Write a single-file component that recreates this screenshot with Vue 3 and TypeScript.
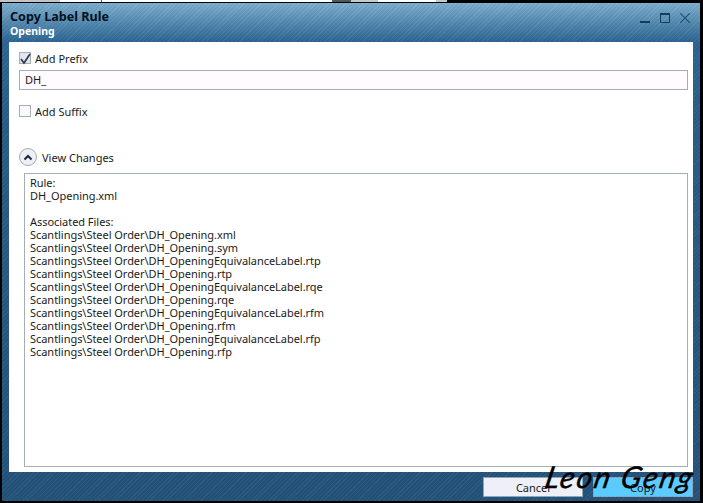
<script setup lang="ts">
const files: string[] = [
  'Scantlings\\Steel Order\\DH_Opening.xml',
  'Scantlings\\Steel Order\\DH_Opening.sym',
  'Scantlings\\Steel Order\\DH_OpeningEquivalanceLabel.rtp',
  'Scantlings\\Steel Order\\DH_Opening.rtp',
  'Scantlings\\Steel Order\\DH_OpeningEquivalanceLabel.rqe',
  'Scantlings\\Steel Order\\DH_Opening.rqe',
  'Scantlings\\Steel Order\\DH_OpeningEquivalanceLabel.rfm',
  'Scantlings\\Steel Order\\DH_Opening.rfm',
  'Scantlings\\Steel Order\\DH_OpeningEquivalanceLabel.rfp',
  'Scantlings\\Steel Order\\DH_Opening.rfp',
]
</script>

<template>
  <div class="screen">
    <div class="desk"></div>
    <div class="window">
      <header class="titlebar">
        <div class="titles">
          <div class="title">Copy Label Rule</div>
          <div class="subtitle">Opening</div>
        </div>
        <div class="controls">
          <svg width="10" height="10" viewBox="0 0 10 10"><path d="M0 9H10" stroke="#123f5f" stroke-width="2" /></svg>
          <svg width="10" height="10" viewBox="0 0 10 10"><path d="M.5 2V9.5H9.5V2" fill="none" stroke="#123f5f" stroke-width="1" /><path d="M0 1H10" stroke="#123f5f" stroke-width="2" /></svg>
          <svg width="10" height="10" viewBox="0 0 10 10"><path d="M0 0 10 10M10 0 0 10" stroke="#1f5273" stroke-width="1.1" /></svg>
        </div>
      </header>
      <main class="panel">
        <div class="check-row">
          <span class="box checked">
            <svg width="12" height="12" viewBox="0 0 12 12"><path d="M2 6 5 10 11 1" fill="none" stroke="#2c3d4c" stroke-width="1.7" /></svg>
          </span>
          <span>Add Prefix</span>
        </div>
        <div class="field">DH_</div>
        <div class="check-row suffix">
          <span class="box"></span>
          <span>Add Suffix</span>
        </div>
        <div class="expander">
          <span class="circle">
            <svg width="10" height="7" viewBox="0 0 10 7"><path d="M1.5 5.5 5 2 8.5 5.5" fill="none" stroke="#1c2a38" stroke-width="2" /></svg>
          </span>
          <span>View Changes</span>
        </div>
        <div class="changes">
          <div>Rule:</div>
          <div>DH_Opening.xml</div>
          <div class="gap">Associated Files:</div>
          <div v-for="file in files" :key="file">{{ file }}</div>
        </div>
      </main>
      <footer class="footer">
        <button class="btn cancel">Cancel</button>
        <button class="btn copy">Copy</button>
        <span class="mark">Leon Geng</span>
      </footer>
    </div>
  </div>
</template>

<style>
html, body { margin: 0; background: #000; }
</style>

<style scoped>
.screen {
  width: 703px;
  height: 503px;
  background: #000;
  overflow: hidden;
  font-family: "Noto Sans", "Open Sans", sans-serif;
  font-size: 11px;
  color: #1a1a1a;
  position: relative;
}
.desk {
  height: 2px;
  margin-bottom: 1px;
  background: linear-gradient(90deg, #c4c4c4 0 60px, #fff 60px 101px, #555 101px 102px, #fff 102px 332px, #555 332px 351px, #c8c8c8 351px 378px, #fff 378px 436px, #c8c8c8 436px 447px, #000 447px);
}
.window {
  width: 698px;
  height: 498px;
  margin-left: 2px;
  display: flex;
  flex-direction: column;
  background:
    repeating-linear-gradient(135deg, rgba(255,255,255,.035) 0 1px, rgba(0,0,0,.035) 1px 3px),
    linear-gradient(180deg, #7db0cf 0, #2c6594 39px, #295e88 120px, #24537a 100%);
}
.titlebar {
  height: 39px;
  flex: none;
  display: flex;
  justify-content: space-between;
  box-sizing: border-box;
  padding: 5px 10px 0 8px;
}
.title {
  font-size: 12.6px;
  line-height: 17px;
  font-weight: 700;
  color: #06121c;
}
.subtitle {
  font-size: 10.5px;
  line-height: 13px;
  font-weight: 700;
  color: #fff;
}
.controls {
  display: flex;
  gap: 10px;
  align-items: flex-start;
  padding-top: 5px;
}
.panel {
  flex: none;
  height: 430px;
  margin: 0 7px;
  background: #fff;
  box-sizing: border-box;
  padding: 10px 5px 5px 10px;
  display: flex;
  flex-direction: column;
}
.check-row {
  display: flex;
  align-items: center;
  gap: 4px;
  height: 12px;
}
.box {
  width: 12px;
  height: 12px;
  box-sizing: border-box;
  border: 1px solid #a3aeb8;
  background: #fbfbfd;
  position: relative;
  display: block;
  flex: none;
}
.box svg { position: absolute; left: -1px; top: 0; }
.box.checked { background: #e4e6ef; }
.field {
  margin-top: 6px;
  height: 20px;
  box-sizing: border-box;
  border: 1px solid #a3aeb8;
  background: #fffbff;
  padding-left: 5px;
  line-height: 18px;
}
.suffix { margin-top: 15px; }
.expander {
  margin-top: 31px;
  display: flex;
  align-items: center;
  gap: 5px;
  height: 18px;
}
.circle {
  width: 18px;
  height: 18px;
  box-sizing: border-box;
  border: 1px solid #a3aeb8;
  border-radius: 50%;
  background: #eeeff7;
  display: flex;
  align-items: center;
  justify-content: center;
}
.changes {
  margin: 7px 0 0 5px;
  height: 294px;
  box-sizing: border-box;
  border: 1px solid #a3aeb8;
  padding: 2px 5px;
  line-height: 13px;
  letter-spacing: -0.04px;
}
.gap { margin-top: 13px; }
.footer {
  flex: 1;
  position: relative;
  display: flex;
  justify-content: flex-end;
  gap: 10px;
  padding: 5px 7px 0 0;
  align-items: flex-start;
}
.btn {
  width: 100px;
  height: 20px;
  box-sizing: border-box;
  border: 1px solid #8fa6b8;
  padding: 0;
  font: inherit;
  color: #1a1a1a;
}
.cancel { background: #eeeff7; }
.copy { background: #5ccbff; }
.mark {
  position: absolute;
  left: 544px;
  top: -14px;
  font-family: "Lato", sans-serif;
  font-style: italic;
  font-weight: 400;
  font-size: 30px;
  line-height: 36px;
  letter-spacing: 2px;
  color: #000;
  -webkit-text-stroke: 0.4px #000;
  transform: skewX(-12deg);
  white-space: nowrap;
}
</style>
